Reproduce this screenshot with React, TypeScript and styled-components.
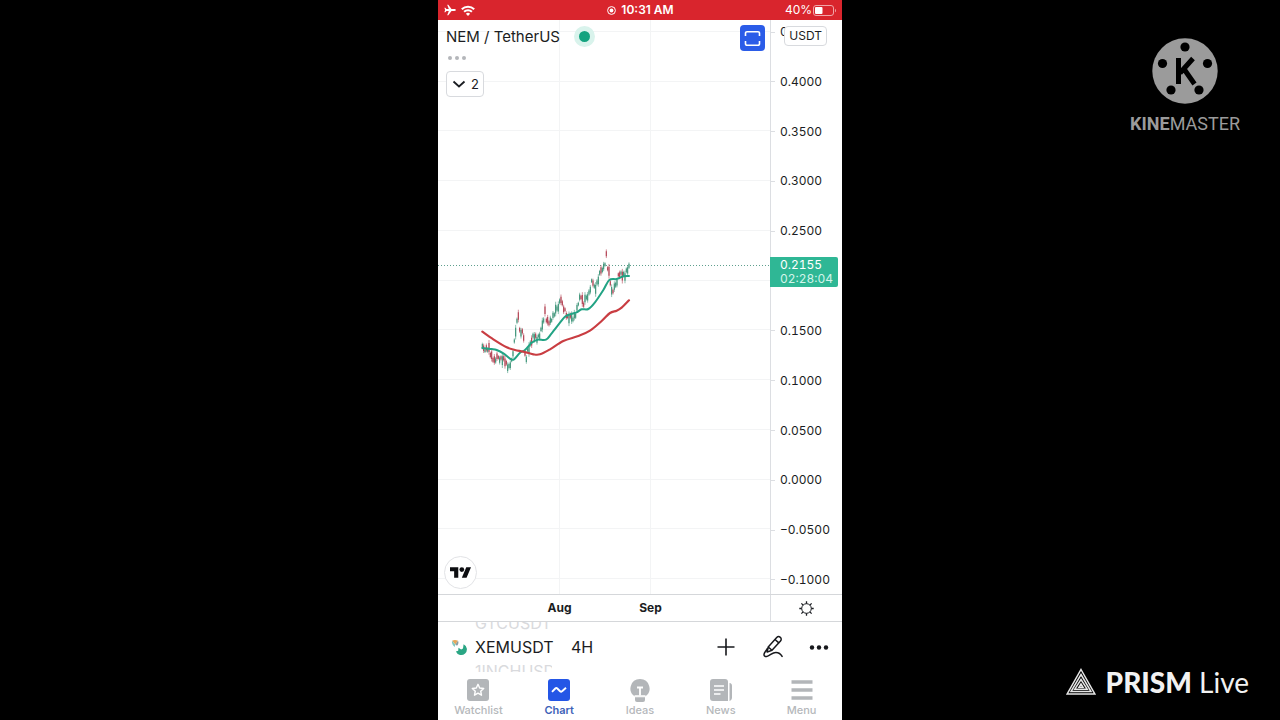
import React from "react";
import styled, { createGlobalStyle } from "styled-components";

const GlobalStyle = createGlobalStyle`
  *, *::before, *::after { box-sizing: border-box; }
  body { margin: 0; background: #000; font-family: Inter, "Liberation Sans", sans-serif; }
  button { font: inherit; color: inherit; background: none; border: 0; padding: 0; cursor: pointer; }
  h1, p, ul { margin: 0; padding: 0; list-style: none; }
  svg { display: block; flex: none; }
`;

const Stage = styled.div`
  display: grid;
  grid-template-columns: 1fr minmax(0, 404px) 1fr;
  min-height: 100vh;
  background: #000;
`;

const Brands = styled.aside`
  grid-column: 3;
  display: flex;
  flex-direction: column;
  justify-content: space-between;
  align-items: flex-end;
  padding: 38px 31px 20px 0;
`;

const KineMaster = styled.div`
  display: flex;
  flex-direction: column;
  align-items: center;
  gap: 9px;
  margin-right: 9px;
  color: #9b9b9b;
  font: 400 18px/22px Roboto, sans-serif;
  b { font-weight: 700; }
`;

const Prism = styled.div`
  display: flex;
  align-items: center;
  gap: 10px;
  color: #f2f2f2;
  font: 400 28px/36px Lato, sans-serif;
  white-space: nowrap;
  b { font-weight: 900; }
`;

const Phone = styled.main`
  grid-column: 2;
  display: flex;
  flex-direction: column;
  background: #fff;
  color: #1b1d22;
`;

const StatusBar = styled.header`
  display: grid;
  grid-template-columns: 1fr auto 1fr;
  align-items: center;
  height: 20px;
  padding: 0 5px 0 6px;
  background: #d9252d;
  color: #fff;
  font-size: 12px;
  line-height: 20px;
`;

const StatusGroup = styled.div<{ $end?: boolean; $strong?: boolean }>`
  display: flex;
  align-items: center;
  justify-content: ${(p) => (p.$end ? "flex-end" : "flex-start")};
  gap: ${(p) => (p.$end ? 1 : 5)}px;
  font-weight: ${(p) => (p.$strong ? 600 : 400)};
`;

const ChartArea = styled.section`
  flex: 1;
  display: grid;
  grid-template-columns: 1fr 71px;
  min-height: 480px;
`;

const Plot = styled.div`
  position: relative;
  border-right: 1px solid #dcdee2;
`;

const PlotSvg = styled.svg`
  position: absolute;
  inset: 0;
  width: 100%;
  height: 100%;
`;

const Legend = styled.div`
  position: relative;
  display: flex;
  justify-content: space-between;
  align-items: flex-start;
  padding: 5px 5px 0 8px;
`;

const LegendColumn = styled.div`
  display: flex;
  flex-direction: column;
  align-items: flex-start;
`;

const Pair = styled.h1`
  display: flex;
  align-items: center;
  gap: 14px;
  font-size: 15px;
  font-weight: 400;
  line-height: 23px;
`;

const MarketDot = styled.span`
  width: 21px;
  height: 21px;
  border: 5px solid #d9f3ec;
  border-radius: 50%;
  background: #14a37f;
`;

const MoreDots = styled.button`
  display: flex;
  gap: 3px;
  padding: 8px 2px 11px;
  i { width: 4px; height: 4px; border-radius: 50%; background: #b4b6ba; }
`;

const IndicatorToggle = styled.button`
  && {
    display: flex;
    align-items: center;
    gap: 5px;
    height: 26px;
    padding: 0 4px 0 5px;
    border: 1px solid #d8dade;
    border-radius: 4px;
    background: #fff;
    font-size: 13px;
  }
`;

const FullscreenButton = styled.button`
  && {
    display: grid;
    place-items: center;
    width: 25px;
    height: 26px;
    border-radius: 4px;
    background: #2b5ce8;
  }
`;

const TradingViewBadge = styled.div`
  position: absolute;
  left: 6px;
  bottom: 5px;
  display: grid;
  place-items: center;
  width: 33px;
  height: 33px;
  border: 1px solid #e2e3e6;
  border-radius: 50%;
  background: #fff;
`;

const PriceAxis = styled.div`
  position: relative;
  display: flex;
  font-variant-numeric: tabular-nums;
`;

const PriceList = styled.ul`
  flex: 1;
  display: flex;
  flex-direction: column;
  justify-content: space-between;
  padding: 4px 0 6px;
`;

const Price = styled.li`
  display: flex;
  align-items: center;
  gap: 5px;
  height: 16px;
  font-size: 12px;
  line-height: 16px;
  &::before { content: ""; width: 4px; height: 1px; background: #dcdee2; }
`;

const CurrencyButton = styled.button`
  && {
    position: absolute;
    top: 6px;
    right: 15px;
    height: 20px;
    padding: 0 4px;
    border: 1px solid #d8dade;
    border-radius: 4px;
    background: #fff;
    font-size: 12px;
    line-height: 18px;
  }
`;

const PriceTag = styled.div`
  position: absolute;
  top: 41.3%;
  left: -1px;
  right: 4px;
  padding: 1px 0 1px 10px;
  border-radius: 0 2px 2px 0;
  background: #2fb795;
  color: #fff;
  font-size: 12px;
  line-height: 14px;
  span { display: block; color: #d3f4ea; }
`;

const TimeAxis = styled.div`
  display: grid;
  grid-template-columns: 1fr 71px;
  height: 28px;
  border: solid #d5d7da;
  border-width: 1px 0;
`;

const Months = styled.div`
  display: grid;
  grid-template-columns: 76fr 91fr 91fr 74fr;
  border-right: 1px solid #dcdee2;
  font-size: 12px;
  font-weight: 700;
  line-height: 26px;
  text-align: center;
  span:first-child { grid-column: 2; }
`;

const SettingsButton = styled.button`
  && { display: grid; place-items: center; }
`;

const SymbolBar = styled.div`
  display: flex;
  align-items: center;
  height: 50px;
  padding: 0 13px;
`;

const Wheel = styled.div`
  display: flex;
  flex-direction: column;
  justify-content: center;
  width: 82px;
  height: 50px;
  margin-left: 7px;
  overflow: hidden;
  font-size: 16px;
  line-height: 26px;
  white-space: nowrap;
`;

const Ghost = styled.span`
  flex: none;
  width: 77px;
  overflow: hidden;
  color: #d9dadd;
  line-height: 22px;
`;

const Interval = styled.button`
  && { margin-left: 14px; font-size: 16px; }
`;

const Tools = styled.div`
  display: flex;
  align-items: center;
  gap: 25px;
  margin-left: auto;
`;

const TabBar = styled.nav`
  display: grid;
  grid-template-columns: repeat(5, 1fr);
  height: 48px;
  padding-top: 7px;
`;

const Tab = styled.button<{ $active?: boolean }>`
  && {
    display: flex;
    flex-direction: column;
    align-items: center;
    gap: 1px;
    color: ${(p) => (p.$active ? "#3d62b8" : "#b5b8bb")};
    font-size: 11px;
    font-weight: ${(p) => (p.$active ? 600 : 500)};
    line-height: 14px;
  }
`;

type Point = [number, number];

const priceTrack: Point[] = [
  [37, 325], [45, 325], [57, 325], [62, 345], [68, 355], [73, 364], [85, 352], [95, 356],
  [103, 358], [110, 375], [116, 386], [122, 372], [128, 362], [131, 300], [136, 290], [140, 242],
  [144, 222], [148, 258], [152, 287], [158, 268], [162, 310], [168, 374], [173, 330], [180, 315],
  [188, 290], [195, 287], [200, 298], [208, 290], [213, 275], [220, 240], [225, 212], [230, 242],
  [240, 247], [250, 230], [258, 212], [266, 194], [273, 174], [278, 197], [285, 213], [293, 235],
  [300, 235], [310, 231], [318, 220], [325, 188], [332, 166], [340, 195], [350, 170], [358, 157],
  [367, 116], [375, 152], [385, 120], [395, 84], [403, 80], [409, 44], [413, 82], [420, 110],
  [423, 160], [432, 150], [440, 125], [447, 98], [458, 105], [465, 108], [470, 94], [477, 84],
];

const fastAverage: Point[] = [
  [37, 324], [65, 327], [80, 330], [100, 340], [120, 356], [132, 358], [150, 338], [165, 330],
  [185, 308], [203, 299], [228, 299], [245, 280], [270, 248], [285, 230], [300, 223], [320, 217],
  [335, 208], [355, 207], [375, 187], [400, 150], [418, 120], [440, 117], [460, 109], [477, 108],
];

const slowAverage: Point[] = [
  [37, 275], [70, 298], [110, 322], [135, 330], [160, 335], [190, 343], [210, 343], [240, 328],
  [280, 303], [325, 288], [360, 272], [395, 243], [420, 219], [440, 212], [455, 203], [477, 181],
];

const smooth = (pts: Point[]) =>
  pts.reduce((d, [x, y], i) => {
    if (i === 0) return `M${x} ${y}`;
    const [ax, ay] = pts[i - 1];
    const [px, py] = pts[Math.max(0, i - 2)];
    const [nx, ny] = pts[Math.min(pts.length - 1, i + 1)];
    return `${d}C${ax + (x - px) / 6} ${ay + (y - py) / 6} ${x - (nx - ax) / 6} ${y - (ny - ay) / 6} ${x} ${y}`;
  }, "");

const priceAt = (x: number) => {
  const i = Math.max(1, priceTrack.findIndex(([px]) => px >= x));
  const [ax, ay] = priceTrack[i - 1];
  const [bx, by] = priceTrack[i];
  return ay + ((by - ay) * (x - ax)) / (bx - ax);
};

const wicks = [10, 19, 8, 14, 9, 22, 7, 16, 10, 13];
const candles = Array.from({ length: 111 }, (_, i) => {
  const x = 37 + i * 4;
  const mid = priceAt(x) + (((i * 5) % 11) - 5) * 1.4;
  const slope = priceAt(Math.min(477, x + 4)) - priceAt(x);
  const reach = wicks[(i * 3) % 10];
  return { x, mid, reach, body: reach * 0.6, up: slope + (((i * 7) % 13) - 6) * 1.5 < -1 };
});

const gridYs = Array.from({ length: 12 }, (_, i) => Math.round(12 + i * 49.73) - 0.5);
const prices = ["0.4500", "0.4000", "0.3500", "0.3000", "0.2500", "", "0.1500", "0.1000", "0.0500", "0.0000", "−0.0500", "−0.1000"];

const PriceChart = () => (
  <PlotSvg viewBox="0 0 332 574" preserveAspectRatio="none" role="img" aria-label="XEMUSDT price chart">
    <g stroke="#f3f4f5" fill="none">
      {gridYs.map((y) => <path key={y} d={`M0 ${y}H332`} />)}
      <path d="M121.5 0V574M212.5 0V574" />
    </g>
    <path d="M0 245.5H332" stroke="#5f9f8e" strokeDasharray="1 2" />
    <g transform="translate(32 220) scale(.3333)" fill="none" strokeLinecap="round">
      {candles.map((c) => (
        <g key={c.x} stroke={c.up ? "#3c9377" : "#b23f50"} strokeLinecap="butt">
          <path d={`M${c.x} ${c.mid - c.reach}V${c.mid + c.reach}`} strokeWidth="2.200" opacity=".8" />
          <path d={`M${c.x} ${c.mid - c.body}V${c.mid + c.body}`} strokeWidth="3.200" />
        </g>
      ))}
      <path d={smooth(fastAverage)} stroke="#22a384" strokeWidth="6" />
      <path d={smooth(slowAverage)} stroke="#c93d42" strokeWidth="6.500" />
    </g>
  </PlotSvg>
);

const PlaneIcon = () => (
  <svg width="12" height="12" viewBox="0 0 12 12" fill="#fff">
    <path d="M11.8 6c0-.6-.6-.9-1.400-.9H7.500L4.300.7H3.200l1.600 4.400H2.500L1.300 3.700H.4L1.100 6 .4 8.300h.9l1.200-1.400h2.300l-1.600 4.400h1.100l3.200-4.400h2.900c.8 0 1.400-.3 1.400-.9z" />
  </svg>
);

const WifiIcon = () => (
  <svg width="14" height="11" viewBox="0 0 14 11" fill="none" stroke="#fff" strokeWidth="2">
    <path d="M.8 4.200a8.800 8.800 0 0 1 12.400 0M3.100 6.800a5.600 5.600 0 0 1 7.800 0" />
    <path d="M7 10.900 4.900 8.700a3 3 0 0 1 4.200 0z" fill="#fff" stroke="none" />
  </svg>
);

const RecordIcon = () => (
  <svg width="9" height="9" viewBox="0 0 9 9">
    <circle cx="4.500" cy="4.500" r="3.900" fill="none" stroke="#fff" />
    <circle cx="4.500" cy="4.500" r="1.900" fill="#fff" />
  </svg>
);

const BatteryIcon = () => (
  <svg width="24" height="11" viewBox="0 0 24 11">
    <rect x=".5" y=".5" width="20" height="10" rx="2.500" fill="none" stroke="#f0a5a8" />
    <rect x="2" y="2" width="7.500" height="7" rx="1" fill="#fff" />
    <path d="M22 3.700c1.300.5 1.300 3.100 0 3.600z" fill="#f0a5a8" />
  </svg>
);

const TradingViewLogo = () => (
  <svg width="21" height="11" viewBox="0 4 35.5 18" fill="#0c0d10">
    <path d="M14 22H7V11H0V4h14zM28 22h-8l7.500-18h8z" />
    <circle cx="20" cy="8" r="4" />
  </svg>
);

const GearIcon = () => (
  <svg width="15" height="15" viewBox="0 0 15 15" fill="none" stroke="#1b1d22">
    <circle cx="7.500" cy="7.500" r="4.800" />
    <path strokeWidth="1.300" d="M7.500.3v2.400M7.500 12.300v2.400M.3 7.500h2.400M12.300 7.500h2.400M2.400 2.400l1.700 1.700M10.900 10.900l1.700 1.700M2.400 12.600l1.700-1.700M10.900 4.100l1.700-1.700" />
  </svg>
);

const CoinIcon = () => (
  <svg width="17" height="17" viewBox="0 0 17 17">
    <path d="M12.600 5.200a5.700 5.700 0 1 1-7.700 7.300l2.300-.8.300-3 2.600 1.900 1.900-1.200z" fill="#2aa684" />
    <path d="M1 1.800C3 .5 5.200.7 7 1.800L4.300 5.500z" fill="#e7a85a" />
    <path d="M1 1.800 4.300 5.500 3.800 8C1.600 6.800.6 4.300 1 1.800z" fill="#84c9c0" />
    <path d="M7 1.800c1 1.500.3 3.700-1 5L4.300 5.500z" fill="#8b9da3" />
  </svg>
);

const PenIcon = () => (
  <svg width="22" height="24" viewBox="0 0 22 24" fill="none" stroke="#17181c" strokeWidth="1.500" strokeLinejoin="round" strokeLinecap="round">
    <path d="M6.200 12 14.700 2.600c1-1.100 2.400-1.300 3.600-.3 1.100 1 1.200 2.500.2 3.600L10 15.300l-4.800 1.800zM13 4.500l3.800 3.400M6.200 12l3.800 3.300M5.300 13.500c-.8 2-2.700 3.500-3.200 5.500-.5 2 1.200 3 3 2.400 3.400-1 5-4 8.800-4 2.800 0 4.900 1.600 6.200 4" />
  </svg>
);

const StarTabIcon = () => (
  <svg width="24" height="23" viewBox="0 0 24 23">
    <rect x="1" y="0" width="22" height="22" rx="3" fill="#b3b6b9" />
    <path d="m12 5.300 1.700 3.700 4 .5-3 2.700.8 4-3.500-2-3.500 2 .8-4-3-2.700 4-.5z" fill="none" stroke="#fff" strokeWidth="1.400" strokeLinejoin="round" />
  </svg>
);

const ChartTabIcon = () => (
  <svg width="24" height="23" viewBox="0 0 24 23">
    <rect x="1" y="0" width="22" height="22" rx="3" fill="#2456e6" />
    <path d="M5 12.800 8.300 9.500c.7-.7 1.300-.7 2 0l2.800 2.700c.7.7 1.300.7 2 0L19 8.800" fill="none" stroke="#fff" strokeWidth="1.900" />
  </svg>
);

const IdeasTabIcon = () => (
  <svg width="24" height="23" viewBox="0 0 24 23">
    <path d="M12 0a9.500 9.500 0 0 0-5 17.600h10A9.500 9.500 0 0 0 12 0z" fill="#b3b6b9" />
    <path d="M9 8.500h6M12 8.500v8" stroke="#fff" strokeWidth="1.800" />
    <path d="M6.500 17h11" stroke="#fff" strokeWidth="1.500" />
    <path d="M7 18.200h10V21a2 2 0 0 1-2 2H9a2 2 0 0 1-2-2z" fill="#b3b6b9" />
  </svg>
);

const NewsTabIcon = () => (
  <svg width="24" height="23" viewBox="0 0 24 23">
    <path d="M4 0h12a3 3 0 0 1 3 3v19H4a3 3 0 0 1-3-3V3a3 3 0 0 1 3-3z" fill="#b3b6b9" />
    <path d="M20.500 4c1.900.2 2.500 1.200 2.500 3v11.500c0 1.800-1 3-2.500 3.500z" fill="#b3b6b9" />
    <path d="M5 7h10M5 11h10M5 15h6.500" stroke="#fff" strokeWidth="1.700" />
  </svg>
);

const MenuTabIcon = () => (
  <svg width="24" height="23" viewBox="0 0 24 23" stroke="#b3b6b9" strokeWidth="3.600">
    <path d="M1.500 3h21M1.500 11h21M1.500 19h21" />
  </svg>
);

const ReelLogo = () => (
  <svg width="66" height="66" viewBox="0 0 66 66">
    <circle cx="33" cy="33" r="32.700" fill="#9b9b9b" />
    <g fill="#000">
      <circle cx="33" cy="9" r="4.600" />
      <circle cx="10.500" cy="25.500" r="4.600" />
      <circle cx="55.500" cy="25.500" r="4.600" />
      <circle cx="19" cy="52" r="4.600" />
      <circle cx="47" cy="52" r="4.600" />
    </g>
    <path d="M26.500 20v26M41 20.500 28 35M32 31l10.500 15" fill="none" stroke="#000" strokeWidth="5" />
  </svg>
);

const PrismLogo = () => (
  <svg width="30" height="28" viewBox="1 0 30 28" fill="none" stroke="#e6e6e6" strokeWidth="1.500">
    <path d="M16 1.500 29.800 26H2.200zM16 6.500 26 23.600H6zM16 11.500l6.200 9.700H9.800z" />
    <path d="M16 16l2 3.200h-4z" />
  </svg>
);

const tabs = [
  { label: "Watchlist", icon: <StarTabIcon /> },
  { label: "Chart", icon: <ChartTabIcon />, active: true },
  { label: "Ideas", icon: <IdeasTabIcon /> },
  { label: "News", icon: <NewsTabIcon /> },
  { label: "Menu", icon: <MenuTabIcon /> },
];

export default function App() {
  return (
    <>
      <GlobalStyle />
      <Stage>
        <Phone>
          <StatusBar>
            <StatusGroup><PlaneIcon /><WifiIcon /></StatusGroup>
            <StatusGroup $strong><RecordIcon />10:31 AM</StatusGroup>
            <StatusGroup $end>40%<BatteryIcon /></StatusGroup>
          </StatusBar>
          <ChartArea>
            <Plot>
              <PriceChart />
              <Legend>
                <LegendColumn>
                  <Pair>NEM / TetherUS<MarketDot /></Pair>
                  <MoreDots aria-label="More"><i /><i /><i /></MoreDots>
                  <IndicatorToggle>
                    <svg width="14" height="14" viewBox="0 0 14 14" fill="none" stroke="#1b1d22" strokeWidth="1.800">
                      <path d="m1.500 4.500 5.500 5 5.500-5" />
                    </svg>
                    2
                  </IndicatorToggle>
                </LegendColumn>
                <FullscreenButton aria-label="Fullscreen">
                  <svg width="17" height="17" viewBox="0 0 17 17" fill="none" stroke="#fff" strokeWidth="1.600">
                    <path d="M1.500 6V3.200a1.500 1.500 0 0 1 1.500-1.500h11a1.500 1.500 0 0 1 1.500 1.500V6M1.500 11v2.800a1.500 1.500 0 0 0 1.500 1.500h11a1.500 1.500 0 0 0 1.500-1.500V11" />
                  </svg>
                </FullscreenButton>
              </Legend>
              <TradingViewBadge><TradingViewLogo /></TradingViewBadge>
            </Plot>
            <PriceAxis>
              <PriceList>
                {prices.map((p, i) => <Price key={i}>{p}</Price>)}
              </PriceList>
              <CurrencyButton>USDT</CurrencyButton>
              <PriceTag>0.2155<span>02:28:04</span></PriceTag>
            </PriceAxis>
          </ChartArea>
          <TimeAxis>
            <Months><span>Aug</span><span>Sep</span></Months>
            <SettingsButton aria-label="Chart settings"><GearIcon /></SettingsButton>
          </TimeAxis>
          <SymbolBar>
            <CoinIcon />
            <Wheel>
              <Ghost>GTCUSDT</Ghost>
              <span>XEMUSDT</span>
              <Ghost>1INCHUSDT</Ghost>
            </Wheel>
            <Interval>4H</Interval>
            <Tools>
              <button aria-label="Add">
                <svg width="22" height="18" viewBox="-2 0 22 18" stroke="#17181c" strokeWidth="1.600"><path d="M9 .5v17M.5 9h17" /></svg>
              </button>
              <button aria-label="Draw"><PenIcon /></button>
              <button aria-label="More options">
                <svg width="20" height="5" viewBox="0 0 20 5" fill="#17181c">
                  <circle cx="3" cy="2.500" r="2.200" /><circle cx="10" cy="2.500" r="2.200" /><circle cx="17" cy="2.500" r="2.200" />
                </svg>
              </button>
            </Tools>
          </SymbolBar>
          <TabBar>
            {tabs.map((t) => (
              <Tab key={t.label} $active={t.active}>{t.icon}{t.label}</Tab>
            ))}
          </TabBar>
        </Phone>
        <Brands>
          <KineMaster><ReelLogo /><p><b>KINE</b>MASTER</p></KineMaster>
          <Prism><PrismLogo /><p><b>PRISM</b> Live</p></Prism>
        </Brands>
      </Stage>
    </>
  );
}
